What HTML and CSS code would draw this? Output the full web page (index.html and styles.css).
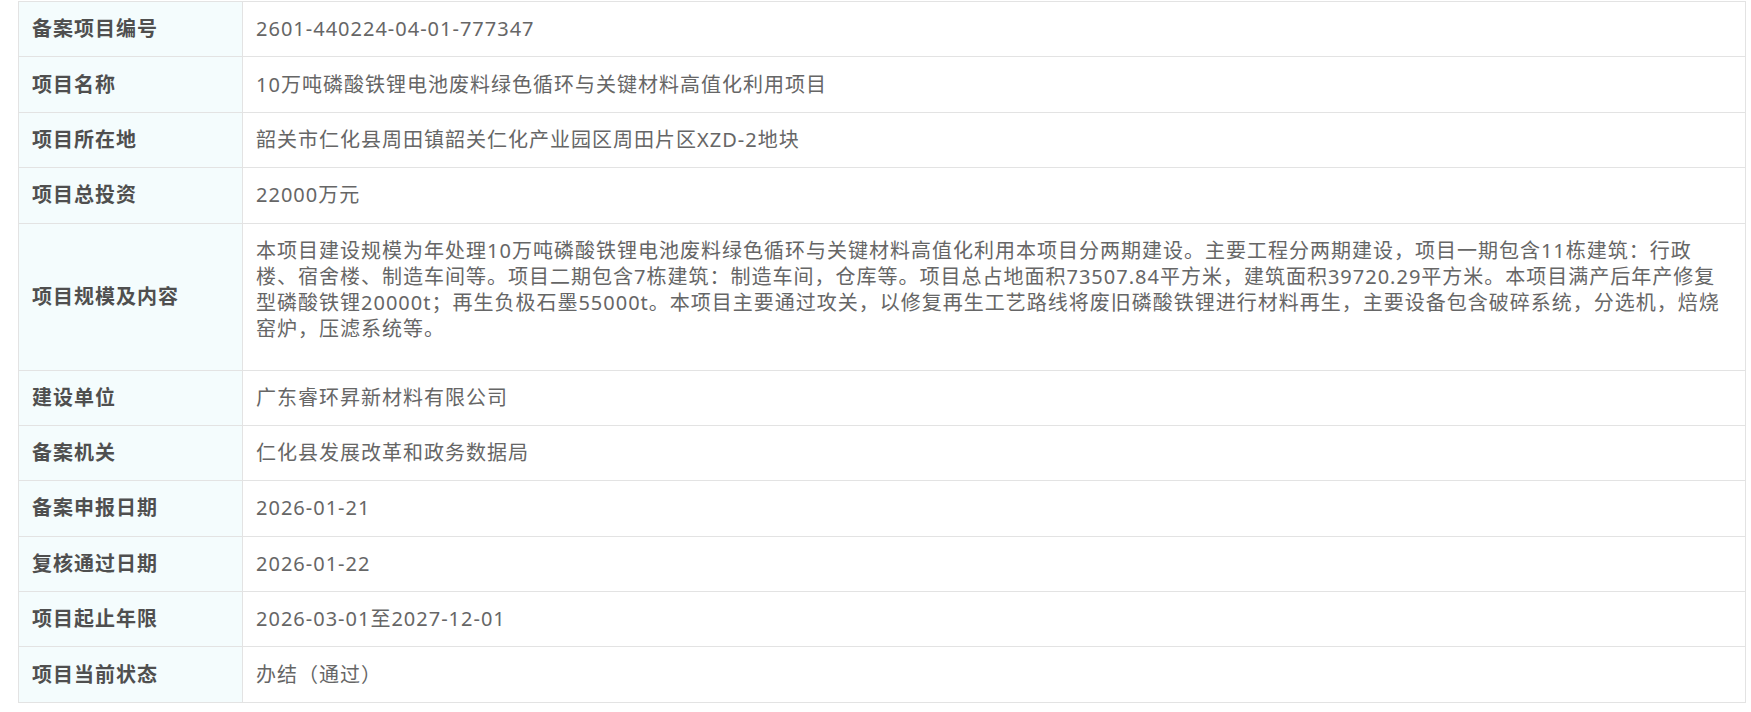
FILE: index.html
```html
<!DOCTYPE html>
<html lang="zh-CN">
<head>
  <meta charset="UTF-8">
  <meta name="viewport" content="width=device-width, initial-scale=1.0">
  <title>项目备案信息</title>
  <link rel="stylesheet" href="styles.css">
</head>
<body>
  <table class="info-table">
    <tbody>
      <tr>
        <th>备案项目编号</th>
        <td>2601-440224-04-01-777347</td>
      </tr>
      <tr>
        <th>项目名称</th>
        <td>10万吨磷酸铁锂电池废料绿色循环与关键材料高值化利用项目</td>
      </tr>
      <tr>
        <th>项目所在地</th>
        <td>韶关市仁化县周田镇韶关仁化产业园区周田片区XZD-2地块</td>
      </tr>
      <tr>
        <th>项目总投资</th>
        <td>22000万元</td>
      </tr>
      <tr class="row-long">
        <th>项目规模及内容</th>
        <td>本项目建设规模为年处理10万吨磷酸铁锂电池废料绿色循环与关键材料高值化利用本项目分两期建设。主要工程分两期建设，项目一期包含11栋建筑：行政楼、宿舍楼、制造车间等。项目二期包含7栋建筑：制造车间，仓库等。项目总占地面积73507.84平方米，建筑面积39720.29平方米。本项目满产后年产修复型磷酸铁锂20000t；再生负极石墨55000t。本项目主要通过攻关，以修复再生工艺路线将废旧磷酸铁锂进行材料再生，主要设备包含破碎系统，分选机，焙烧窑炉，压滤系统等。</td>
      </tr>
      <tr>
        <th>建设单位</th>
        <td>广东睿环昇新材料有限公司</td>
      </tr>
      <tr>
        <th>备案机关</th>
        <td>仁化县发展改革和政务数据局</td>
      </tr>
      <tr>
        <th>备案申报日期</th>
        <td>2026-01-21</td>
      </tr>
      <tr>
        <th>复核通过日期</th>
        <td>2026-01-22</td>
      </tr>
      <tr>
        <th>项目起止年限</th>
        <td>2026-03-01至2027-12-01</td>
      </tr>
      <tr>
        <th>项目当前状态</th>
        <td>办结（通过）</td>
      </tr>
    </tbody>
  </table>
</body>
</html>
```

FILE: styles.css
```css
/* Estilo global */
body {
  margin: 0;
  padding: 1px 5px 0 18px;
  background-color: #fff;
  font-family: "Noto Sans", "Noto Sans CJK SC", sans-serif;
}

/* Tabla de informacion */
.info-table {
  width: 100%;
  border-collapse: collapse;
  border: 1px solid #e3e3e3;
  font-size: 20px;
  letter-spacing: 1px;
  line-height: 26px;
}

.info-table th,
.info-table td {
  border: 1px solid #e3e3e3;
  padding: 14.2px 13px;
  text-align: left;
  vertical-align: middle;
}

.info-table th {
  width: 197px;
  background-color: #f4fcfd;
  color: #4f4f4f;
  font-weight: bold;
  white-space: nowrap;
}

.info-table td {
  color: #666;
  font-weight: normal;
}

.info-table .row-long td {
  padding-top: 14px;
  padding-bottom: 28px;
}
```
